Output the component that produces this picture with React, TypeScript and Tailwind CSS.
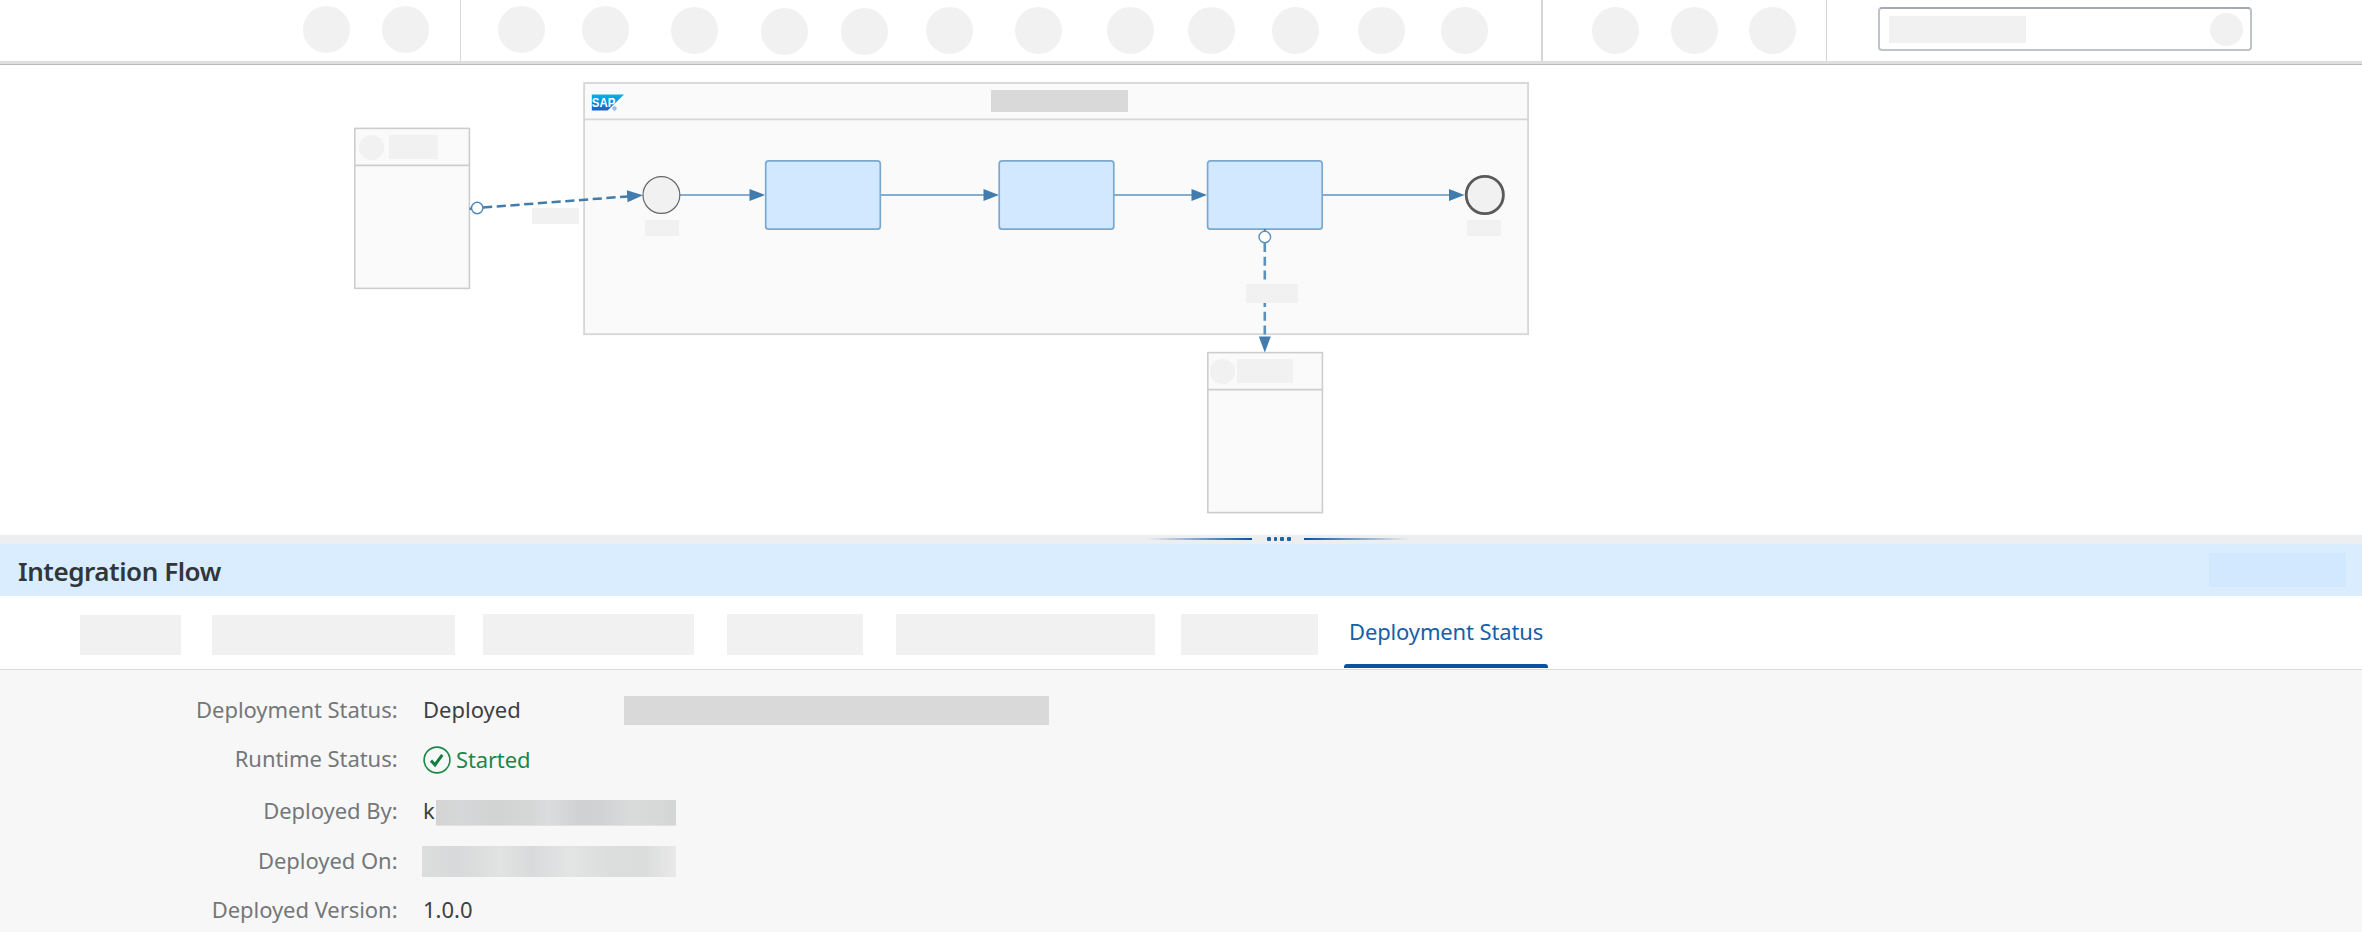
import type { ReactNode } from "react";

const DOT = "mt-[7px] h-[47px] w-[47px] shrink-0 rounded-full bg-[#f1f1f1]";

const fileActions = ["ml-[303px] -translate-y-px", "ml-[32px] -translate-y-px"];
const paletteActions = [
  "ml-[37px] -translate-y-px",
  "ml-[37px] -translate-y-px",
  "ml-[42px]",
  "ml-[43px] translate-y-px",
  "ml-[33px] translate-y-px",
  "ml-[38px]",
  "ml-[42px]",
  "ml-[45px]",
  "ml-[34px]",
  "ml-[37px]",
  "ml-[39px]",
  "ml-[36px]",
];
const zoomActions = ["ml-[49px]", "ml-[32px]", "ml-[31px]"];

function Dots({ items }: { items: string[] }) {
  return (
    <>
      {items.map((c, i) => (
        <span key={i} className={`${DOT} ${c}`} />
      ))}
    </>
  );
}

function Toolbar() {
  return (
    <header className="flex h-[65px] items-start border-b border-[#b9babb] bg-white shadow-[inset_0_-3px_0_#dedfdf]">
      <Dots items={fileActions} />
      <span className="ml-[31px] h-[61px] w-px shrink-0 bg-[#d9d9d9]" />
      <Dots items={paletteActions} />
      <span className="ml-[53px] h-[61px] w-[2px] shrink-0 bg-[#d6d6d6]" />
      <Dots items={zoomActions} />
      <span className="ml-[30px] h-[61px] w-px shrink-0 bg-[#d5d5d5]" />
      <div className="mt-[7px] ml-[51px] flex h-[44px] w-[374px] shrink-0 items-center justify-between rounded-[4px] border-2 border-[#bfc3c8] border-t-[#a6aab1] pr-[7px] pl-[9px]">
        <span className="h-[27px] w-[137px] bg-[#f1f1f1]" />
        <span className="h-[33px] w-[33px] rounded-full bg-[#f1f1f1]" />
      </div>
    </header>
  );
}

function Participant({ x, y }: { x: number; y: number }) {
  return (
    <g fill="#fafafa" stroke="#cdcdcd" strokeWidth="1.6">
      <rect x={x} y={y} width="114.6" height="160" />
      <path d={`M${x} ${y + 37}h114.6`} />
    </g>
  );
}

function Task({ x }: { x: number }) {
  return <rect x={x} y="160.8" width="114.6" height="68.4" rx="3" fill="#d1e8ff" stroke="#7ba9ce" strokeWidth="1.7" />;
}

function Sequence({ from, to }: { from: number; to: number }) {
  return (
    <g>
      <path d={`M${from} 195H${to - 14}`} stroke="#85add0" strokeWidth="2" />
      <path d={`M${to - 15.5} 189v12l15.5-6z`} fill="#427cac" />
    </g>
  );
}

function Canvas() {
  return (
    <svg className="block h-[470px] w-full bg-white" viewBox="0 65 2362 470" fill="none">
      <defs>
        <linearGradient id="logo" x1="0" y1="0" x2="0" y2="1">
          <stop offset="0" stopColor="#00b4ee" />
          <stop offset="1" stopColor="#1f5fc4" />
        </linearGradient>
      </defs>
      <g fill="#fafafa" stroke="#d6d6d6" strokeWidth="1.8">
        <rect x="584.1" y="83" width="944" height="251.2" />
        <path d="M584.1 119.3h944" />
      </g>
      <path d="M591.8 94.4h32.2l-16.4 16.2h-15.8z" fill="url(#logo)" />
      <text x="591.8" y="107.4" fill="#fff" fontFamily="'Liberation Sans', sans-serif" fontWeight="700" fontSize="13.5" textLength="23.5" lengthAdjust="spacingAndGlyphs">
        SAP
      </text>
      <circle cx="614.5" cy="108.4" r="1.7" fill="#a9c3ea" stroke="#7ba1dc" strokeWidth="0.8" />
      <path d="M991 90h137v22H991z" fill="#d9d9d9" />

      <Participant x={354.8} y={128.4} />
      <circle cx="371.5" cy="147.5" r="12.6" fill="#f1f1f1" />
      <path d="M389 135h49v24h-49z" fill="#f1f1f1" />

      <Participant x={1207.8} y={352.6} />
      <circle cx="1222.5" cy="371.5" r="12.6" fill="#f1f1f1" />
      <path d="M1237 359h56v24h-56z" fill="#f1f1f1" />

      <path d="M483 207.5L628 196.4" stroke="#427cac" strokeWidth="2.5" strokeDasharray="9.2 4.55" />
      <path d="M469.5 208.7h2" stroke="#427cac" strokeWidth="2.4" />
      <circle cx="477.2" cy="208" r="5.7" fill="#fff" stroke="#4f8aba" strokeWidth="1.5" />
      <path d="M626.8 190.2l.8 12 15.4-7z" fill="#427cac" />
      <path d="M532 208h47v16h-47z" fill="#f1f1f1" />

      <Sequence from={680} to={765} />
      <Sequence from={880} to={999} />
      <Sequence from={1114} to={1207} />
      <Sequence from={1322} to={1464.5} />
      <circle cx="661.4" cy="195" r="18.4" fill="#f1f1f1" stroke="#666" strokeWidth="1.2" />
      <path d="M645 220h34v16h-34z" fill="#f1f1f1" />
      <Task x={765.7} />
      <Task x={999.2} />
      <Task x={1207.6} />
      <circle cx="1484.8" cy="195" r="18.6" fill="#f1f1f1" stroke="#5a5a5a" strokeWidth="2.8" />
      <path d="M1467 220h34v16h-34z" fill="#f1f1f1" />

      <path d="M1264.8 242.9V335" stroke="#5a90bc" strokeWidth="2.6" strokeDasharray="9.1 4.66" />
      <path d="M1264.8 229v3" stroke="#427cac" strokeWidth="2" />
      <circle cx="1264.8" cy="237" r="5.8" fill="#fff" stroke="#5a91bd" strokeWidth="1.4" />
      <path d="M1258.8 336.6h12l-6 16z" fill="#427cac" />
      <path d="M1246 284h52v19h-52z" fill="#f1f1f1" />
    </svg>
  );
}

function Splitter() {
  return (
    <div className="flex h-[8.5px] items-center bg-[#edeef0]">
      <span className="ml-[1147px] h-[2px] w-[105px] bg-linear-to-r from-transparent to-[#0854a0]" />
      <span className="ml-[15px] flex gap-[3px]">
        <i className="h-[3.7px] w-[3.7px] rounded-[1px] bg-[#1e63a8]" />
        <i className="h-[3.7px] w-[3.7px] rounded-[1px] bg-[#1e63a8]" />
        <i className="h-[3.7px] w-[3.7px] rounded-[1px] bg-[#1e63a8]" />
        <i className="h-[3.7px] w-[3.7px] rounded-[1px] bg-[#1e63a8]" />
      </span>
      <span className="ml-[13px] h-[2px] w-[105px] bg-linear-to-l from-transparent to-[#0854a0]" />
    </div>
  );
}

function Tabs() {
  return (
    <nav className="flex h-[74px] items-start border-b border-[#dadbdc] bg-white">
      <span className="mt-[19px] ml-[80px] h-[40px] w-[101px] bg-[#f1f1f1]" />
      <span className="mt-[19px] ml-[31px] h-[40px] w-[243px] bg-[#f1f1f1]" />
      <span className="mt-[18px] ml-[28px] h-[41px] w-[211px] bg-[#f1f1f1]" />
      <span className="mt-[18px] ml-[33px] h-[41px] w-[136px] bg-[#f1f1f1]" />
      <span className="mt-[18px] ml-[33px] h-[41px] w-[259px] bg-[#f1f1f1]" />
      <span className="mt-[18px] ml-[26px] h-[41px] w-[137px] bg-[#f1f1f1]" />
      <span className="ml-[26px] flex h-[72px] w-[204px] flex-col justify-between">
        <span className="mt-[21px] pl-[5px] text-[22px] leading-[28px] tracking-[-0.14px] whitespace-nowrap text-[#1660a8]">
          Deployment Status
        </span>
        <span className="h-[4px] rounded-t-[3px] bg-[#0854a0]" />
      </span>
    </nav>
  );
}

function Row({ label, className, children }: { label: string; className: string; children: ReactNode }) {
  return (
    <div className={`flex items-start ${className}`}>
      <span className="w-[397.5px] text-right tracking-[-0.05px] text-[#74777a]">{label}</span>
      <div className="flex flex-1 items-start text-[#3c4044]">{children}</div>
    </div>
  );
}

function StatusIcon() {
  return (
    <svg className="mt-[2px] ml-[25.5px] h-[28px] w-[28px]" viewBox="0 0 28 28" fill="none">
      <circle cx="14" cy="14" r="12.9" stroke="#188a45" strokeWidth="1.6" />
      <path d="M8 14.6l4 4.2L19.3 8.9" stroke="#107e3e" strokeWidth="3" />
    </svg>
  );
}

export default function App() {
  return (
    <div className="flex h-[932px] w-[2362px] flex-col overflow-hidden bg-[#f7f7f7] font-['Noto_Sans',sans-serif]">
      <Toolbar />
      <Canvas />
      <Splitter />
      <div className="flex h-[52.5px] items-center justify-between bg-[#d9edff] pr-[16px] pl-[18px]">
        <h1 className="pt-[2px] text-[26px] leading-[36px] font-semibold tracking-[-0.45px] text-[#32363a]">Integration Flow</h1>
        <span className="h-[34px] w-[137px] bg-[#d1e8ff]" />
      </div>
      <Tabs />
      <section className="flex flex-col pt-[24.5px] text-[22px] leading-[28px] whitespace-nowrap">
        <Row label="Deployment Status:" className="h-[49px]">
          <span className="ml-[25.5px] w-[201px]">Deployed</span>
          <span className="mt-[1.5px] h-[29px] w-[425px] bg-[#d9d9d9]" />
        </Row>
        <Row label="Runtime Status:" className="h-[52px]">
          <StatusIcon />
          <span className="mt-px ml-[5px] tracking-[-0.15px] text-[#1c8648]">Started</span>
        </Row>
        <Row label="Deployed By:" className="h-[50px]">
          <span className="ml-[25.5px] w-[13px]">k</span>
          <span className="mt-[4px] h-[26px] w-[240px] border-b border-[#e2e2e3] bg-linear-[90deg,#d4d4d4,#d6d7d8_10%,#d2d3d3_25%,#d5d6d6_38%,#dadcdd_47%,#d0d1d2_60%,#d2d3d4_70%,#dadbdb_82%,#d4d5d5]" />
        </Row>
        <Row label="Deployed On:" className="h-[49px]">
          <span className="ml-[24.5px] h-[31px] w-[254px] bg-linear-[90deg,#dcdddd,#d8d9da_14%,#e1e3e2_31%,#d9dadb_43%,#e3e4e4_58%,#dcdddd_72%,#dbdddc_88%,#e9e9e9]" />
        </Row>
        <Row label="Deployed Version:" className="h-[37px]">
          <span className="ml-[25.5px]">1.0.0</span>
        </Row>
      </section>
    </div>
  );
}
